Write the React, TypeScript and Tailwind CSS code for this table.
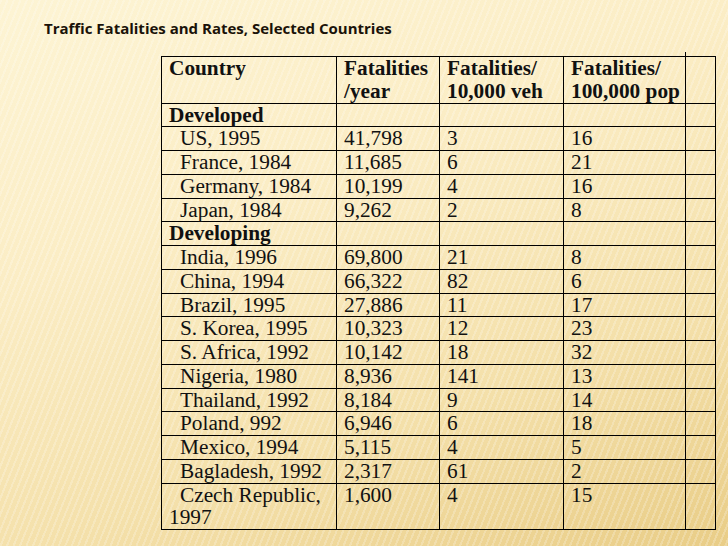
const rows: [string, string, string, string][] = [
  ["US, 1995", "41,798", "3", "16"],
  ["France, 1984", "11,685", "6", "21"],
  ["Germany, 1984", "10,199", "4", "16"],
  ["Japan, 1984", "9,262", "2", "8"],
];

const developing: [string, string, string, string][] = [
  ["India, 1996", "69,800", "21", "8"],
  ["China, 1994", "66,322", "82", "6"],
  ["Brazil, 1995", "27,886", "11", "17"],
  ["S. Korea, 1995", "10,323", "12", "23"],
  ["S. Africa, 1992", "10,142", "18", "32"],
  ["Nigeria, 1980", "8,936", "141", "13"],
  ["Thailand, 1992", "8,184", "9", "14"],
  ["Poland, 992", "6,946", "6", "18"],
  ["Mexico, 1994", "5,115", "4", "5"],
  ["Bagladesh, 1992", "2,317", "61", "2"],
];

const cell = "border border-black pl-[7px] pr-0 py-0 align-top";

function DataRow({ r }: { r: [string, string, string, string] }) {
  return (
    <tr>
      <td className={`${cell} indent-[11px] whitespace-nowrap`}>{r[0]}</td>
      <td className={cell}>{r[1]}</td>
      <td className={cell}>{r[2]}</td>
      <td className={cell}>{r[3]}</td>
      <td className={cell}></td>
    </tr>
  );
}

function GroupRow({ label }: { label: string }) {
  return (
    <tr>
      <td className={`${cell} font-bold`}>{label}</td>
      <td className={cell}></td>
      <td className={cell}></td>
      <td className={cell}></td>
      <td className={cell}></td>
    </tr>
  );
}

export default function App() {
  return (
    <div className="relative w-[728px] h-[546px] overflow-hidden bg-[image:repeating-linear-gradient(112deg,rgba(255,255,255,0.22)_0px,rgba(255,255,255,0.22)_2px,rgba(0,0,0,0)_2px,rgba(0,0,0,0)_6px),linear-gradient(160deg,#fdf4d4_0%,#fbedc5_35%,#f4e0aa_70%,#e9cd87_100%)]">
      <div className="pl-[44px] pt-[19px] h-[56px] font-['Open_Sans','Lato',sans-serif] font-bold text-[15px] leading-[18px] text-[#1a1208]">
        Traffic Fatalities and Rates, Selected Countries
      </div>
      {/* stray tick of the last rule above the table top */}
      <div className="absolute left-[685px] top-[52px] w-px h-[5px] bg-black" />
      <table className="ml-[161px] table-fixed border-collapse w-[554px] font-['Liberation_Serif','Times_New_Roman',serif] text-[21.3px] leading-[22.75px] text-[#111]">
        <tbody>
          <tr className="font-bold">
            <td className={`${cell} w-[175px]`}>Country</td>
            <td className={`${cell} w-[103px]`}>
              Fatalities
              <br />
              /year
            </td>
            <td className={`${cell} w-[124px]`}>
              Fatalities/
              <br />
              10,000 veh
            </td>
            <td className={`${cell} w-[122px] whitespace-nowrap`}>
              Fatalities/
              <br />
              100,000 pop
            </td>
            <td className={`${cell} w-[30px]`}></td>
          </tr>
          <GroupRow label="Developed" />
          {rows.map((r) => (
            <DataRow key={r[0]} r={r} />
          ))}
          <GroupRow label="Developing" />
          {developing.map((r) => (
            <DataRow key={r[0]} r={r} />
          ))}
          <tr>
            <td className={`${cell} indent-[11px]`}>
              Czech Republic,
              <br />
              1997
            </td>
            <td className={cell}>1,600</td>
            <td className={cell}>4</td>
            <td className={cell}>15</td>
            <td className={cell}></td>
          </tr>
        </tbody>
      </table>
    </div>
  );
}
